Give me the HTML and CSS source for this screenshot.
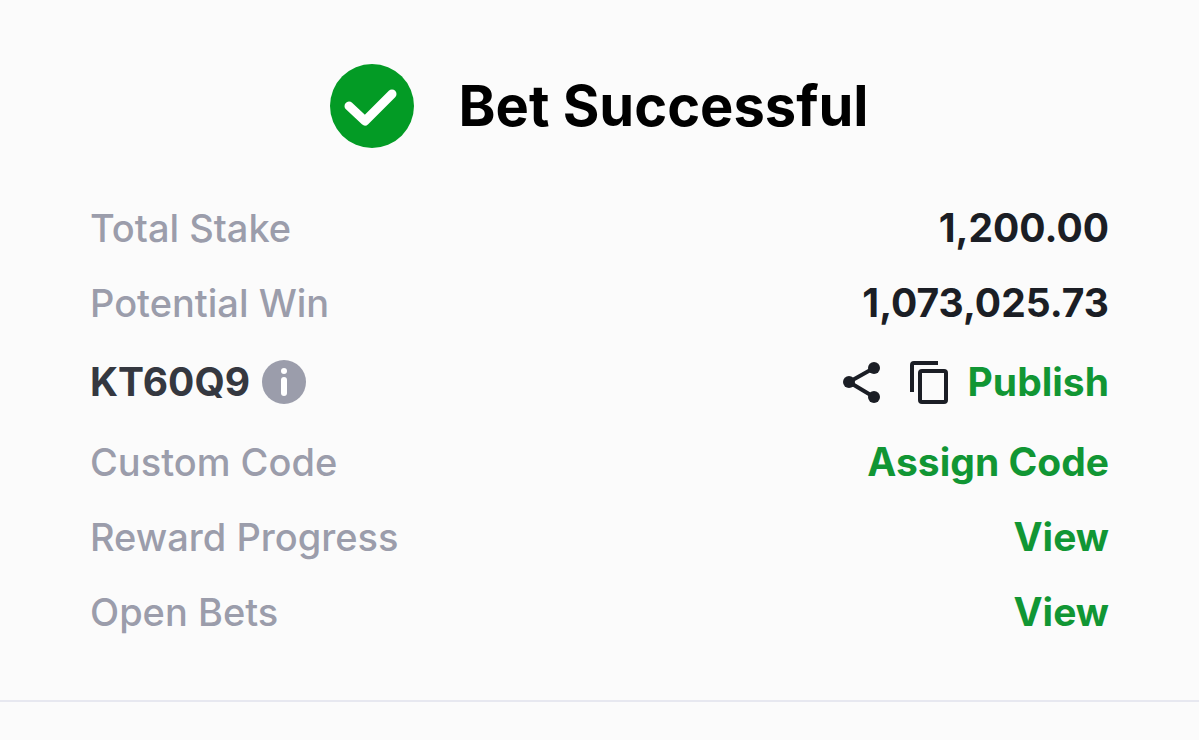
FILE: index.html
```html
<!DOCTYPE html>
<html lang="en">
<head>
    <meta charset="UTF-8">
    <meta name="viewport" content="width=device-width, initial-scale=1.0">
    <title>Bet Successful</title>
    <link rel="stylesheet" href="styles.css">
</head>
<body>
    <main class="receipt">
        <div class="header">
            <svg class="check" viewBox="0 0 84 84" aria-hidden="true">
                <circle cx="42" cy="42" r="42" fill="#039b25"/>
                <path d="M19 42L35 57L62 30" fill="none" stroke="#fff" stroke-width="9" stroke-linecap="round" stroke-linejoin="round"/>
            </svg>
            <h1>Bet Successful</h1>
        </div>
        <div class="row">
            <span class="label">Total Stake</span>
            <span class="value">1,200.00</span>
        </div>
        <div class="row">
            <span class="label">Potential Win</span>
            <span class="value">1,073,025.73</span>
        </div>
        <div class="row row-code">
            <div class="code">
                <span>KT60Q9</span>
                <button class="icon-btn" type="button" aria-label="Info">
                    <svg class="info" viewBox="0 0 44 44">
                        <circle cx="22" cy="22" r="22" fill="#9b9dab"/>
                        <circle cx="22" cy="11" r="3" fill="#fff"/>
                        <path d="M22 20V33" stroke="#fff" stroke-width="6" stroke-linecap="round"/>
                    </svg>
                </button>
            </div>
            <div class="actions">
                <button class="icon-btn" type="button" aria-label="Share">
                    <svg class="share" viewBox="0 0 38 44">
                        <path d="M31 8L6 22L31 37" fill="none" stroke="#1b1e25" stroke-width="4"/>
                        <circle cx="31" cy="8" r="6" fill="#1b1e25"/>
                        <circle cx="6" cy="22" r="6" fill="#1b1e25"/>
                        <circle cx="31" cy="37" r="6" fill="#1b1e25"/>
                    </svg>
                </button>
                <button class="icon-btn" type="button" aria-label="Copy">
                    <svg class="copy" viewBox="0 0 38 44">
                        <path d="M2 32V5Q2 3 4 3H28" fill="none" stroke="#1b1e25" stroke-width="4"/>
                        <rect x="10" y="11" width="26" height="31" rx="2" fill="none" stroke="#1b1e25" stroke-width="4"/>
                    </svg>
                </button>
                <button class="link" type="button">Publish</button>
            </div>
        </div>
        <div class="row">
            <span class="label">Custom Code</span>
            <button class="link" type="button">Assign Code</button>
        </div>
        <div class="row">
            <span class="label">Reward Progress</span>
            <button class="link" type="button">View</button>
        </div>
        <div class="row">
            <span class="label">Open Bets</span>
            <button class="link" type="button">View</button>
        </div>
    </main>
</body>
</html>
```
FILE: styles.css
```css
* {
    box-sizing: border-box;
}

body {
    margin: 0;
    font-family: Inter, "Liberation Sans", sans-serif;
    font-size: 39px;
    line-height: 48px;
    color: #1b1e25;
    background-color: #fbfbfb;
}

.receipt {
    padding: 64px 90px 51px;
    border-bottom: 2px solid #e7e8f0;
}

.header {
    display: flex;
    justify-content: center;
    align-items: center;
    gap: 44px;
    margin-bottom: 42px;
}

h1 {
    margin: 0;
    font-size: 56px;
    line-height: 84px;
    font-weight: 700;
    color: #000;
}

.check {
    width: 84px;
    height: 84px;
}

.row {
    display: flex;
    justify-content: space-between;
    align-items: center;
    height: 75px;
}

.row-code {
    height: 84px;
}

.label {
    font-size: 38px;
    color: #9b9dab;
    font-weight: 500;
}

.value {
    font-weight: 700;
}

.code {
    display: flex;
    align-items: center;
    gap: 12px;
    font-weight: 700;
    color: #353840;
}

.actions {
    display: flex;
    align-items: center;
}

button {
    display: block;
    padding: 0;
    border: none;
    background: none;
    font: inherit;
    cursor: pointer;
}

.icon-btn svg {
    display: block;
    height: 44px;
}

.info {
    width: 44px;
}

.share,
.copy {
    width: 38px;
}

.share {
    margin-right: 29px;
}

.copy {
    margin-right: 20px;
}

.link {
    font-weight: 700;
    color: #119634;
}
```
